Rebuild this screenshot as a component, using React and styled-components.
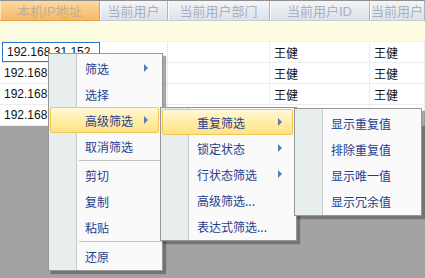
import styled, { createGlobalStyle } from "styled-components";

const GlobalStyle = createGlobalStyle`
  html, body {
    margin: 0;
    padding: 0;
    background: #a3a3a3;
  }
  body {
    font-family: "Liberation Sans", "Noto Sans CJK SC", sans-serif;
  }
`;

const Page = styled.div`
  position: relative;
  width: 425px;
  height: 278px;
  overflow: hidden;
  background: #a3a3a3;
`;

const Grid = styled.div`
  display: flex;
  flex-direction: column;
  border-top: 1px solid #8e8e8e;
  background: #fff;
`;

const HeaderRow = styled.div`
  display: flex;
  height: 20px;
`;

const HeaderCell = styled.div`
  flex: ${({ $w }) => ($w ? `0 0 ${$w}px` : "1 1 auto")};
  box-sizing: border-box;
  display: flex;
  align-items: center;
  justify-content: center;
  font-size: 13px;
  white-space: nowrap;
  overflow: hidden;
  color: ${({ $active }) => ($active ? "#c6ad8f" : "#a8b0bc")};
  background: ${({ $active }) =>
    $active
      ? "linear-gradient(#fcdca4, #f7c57c 60%, #f5b964)"
      : "linear-gradient(#f3f5f8, #e6eaf0 55%, #dce2ea)"};
  border-right: 1px solid ${({ $active }) => ($active ? "#e5a04a" : "#a9b5c5")};
  border-bottom: 1px solid ${({ $active }) => ($active ? "#e5a04a" : "#c4ccd7")};
  box-shadow: inset 1px 0 0 ${({ $active }) => ($active ? "#fde6bd" : "#fbfcfd")};
`;

const FilterRow = styled.div`
  height: 20px;
  background: #fffde1;
  border-bottom: 1px solid #f2f2e8;
`;

const Row = styled.div`
  display: flex;
  height: 20px;
  border-bottom: 1px solid #ededed;
`;

const Cell = styled.div`
  flex: ${({ $w }) => ($w ? `0 0 ${$w}px` : "1 1 auto")};
  box-sizing: border-box;
  display: flex;
  align-items: center;
  padding-left: 4px;
  font-size: 12px;
  color: #111;
  white-space: nowrap;
  overflow: hidden;
  border-right: 1px solid #ededed;
  ${({ $selected }) =>
    $selected &&
    `
    margin: 0 0 0 2px;
    border: 1px solid #2a78cc;
  `}
`;

const Menu = styled.div`
  position: absolute;
  left: ${({ $x }) => $x}px;
  top: ${({ $y }) => $y}px;
  width: ${({ $w }) => $w}px;
  box-sizing: border-box;
  padding: 1px 0;
  border: 1px solid #979797;
  background: linear-gradient(
    to right,
    #e8eeee 0,
    #e8eeee 27px,
    #c5c9c9 27px,
    #c5c9c9 28px,
    #fafafa 28px
  );
  box-shadow: 3px 3px 1px rgba(60, 60, 60, 0.45);
`;

const Item = styled.div`
  position: relative;
  height: 26px;
  display: flex;
  align-items: center;
  padding-left: 36px;
  font-size: 12px;
  color: #1f3d8e;
  font-family: "Noto Sans CJK SC", sans-serif;
  white-space: nowrap;
  ${({ $hot }) =>
    $hot &&
    `
    margin: 0 3px 0 1px;
    padding-left: 34px;
    height: 24px;
    border: 1px solid #efc858;
    border-radius: 2px;
    background: linear-gradient(#fff8d8, #ffeda8 50%, #ffe283);
  `}
`;

const Arrow = styled.span`
  position: absolute;
  right: ${({ $r }) => $r}px;
  top: 50%;
  margin-top: -4px;
  width: 0;
  height: 0;
  border-top: 4px solid transparent;
  border-bottom: 4px solid transparent;
  border-left: 4px solid #5a79b8;
`;

const Separator = styled.div`
  height: 3px;
  margin-left: 30px;
  display: flex;
  align-items: center;
  &::after {
    content: "";
    flex: 1;
    height: 1px;
    background: #c6c6c6;
  }
`;

const cols = [100, 68, 102, 100, null];
const headers = ["本机IP地址", "当前用户", "当前用户部门", "当前用户ID", "当前用户"];

export default function App() {
  return (
    <Page>
      <GlobalStyle />
      <Grid>
        <HeaderRow>
          {headers.map((h, i) => (
            <HeaderCell key={i} $w={cols[i]} $active={i === 0}>
              {h}
            </HeaderCell>
          ))}
        </HeaderRow>
        <FilterRow />
        {[0, 1, 2, 3].map((r) => (
          <Row key={r}>
            <Cell $w={r === 0 ? 98 : 100} $selected={r === 0}>
              192.168.31.152
            </Cell>
            <Cell $w={cols[1]} />
            <Cell $w={cols[2]} />
            <Cell $w={cols[3]}>{r < 3 ? "王健" : ""}</Cell>
            <Cell>{r < 3 ? "王健" : ""}</Cell>
          </Row>
        ))}
      </Grid>

      <Menu $x={48} $y={53} $w={115}>
        <Item>
          筛选
          <Arrow $r={14} />
        </Item>
        <Item>选择</Item>
        <Item $hot>
          高级筛选
          <Arrow $r={10} />
        </Item>
        <Item>取消筛选</Item>
        <Separator />
        <Item>剪切</Item>
        <Item>复制</Item>
        <Item>粘贴</Item>
        <Separator />
        <Item>还原</Item>
      </Menu>

      <Menu $x={160} $y={107} $w={137}>
        <Item $hot>
          重复筛选
          <Arrow $r={10} />
        </Item>
        <Item>
          锁定状态
          <Arrow $r={14} />
        </Item>
        <Item>
          行状态筛选
          <Arrow $r={14} />
        </Item>
        <Item>高级筛选...</Item>
        <Item>表达式筛选...</Item>
      </Menu>

      <Menu $x={294} $y={108} $w={128}>
        <Item>显示重复值</Item>
        <Item>排除重复值</Item>
        <Item>显示唯一值</Item>
        <Item>显示冗余值</Item>
      </Menu>
    </Page>
  );
}
